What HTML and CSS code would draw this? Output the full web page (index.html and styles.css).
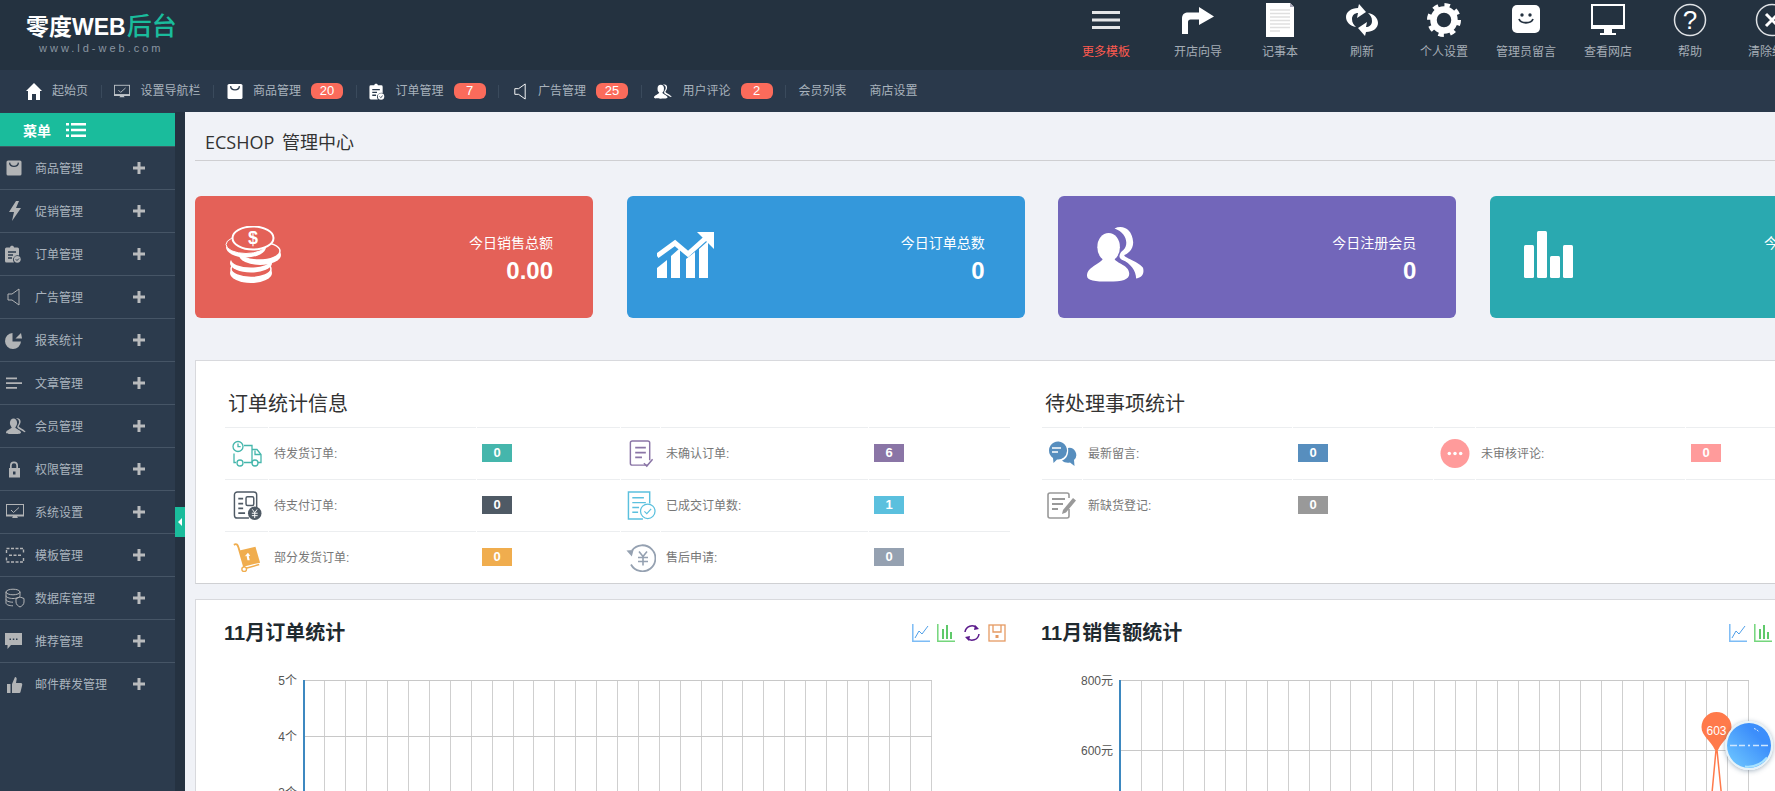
FILE: index.html
```html
<!DOCTYPE html>
<html lang="zh-CN">
<head>
<meta charset="utf-8">
<title>ECSHOP 管理中心</title>
<link rel="stylesheet" href="styles.css">
</head>
<body>
<svg class="sprite" xmlns="http://www.w3.org/2000/svg">
  <symbol id="i-bag" viewBox="0 0 16 16"><rect x="0.5" y="0.5" width="15" height="15" rx="1.6" fill="currentColor"/><path d="M3.6 2.6c.4 5 8.4 5 8.8 0" fill="none" stroke="#2b3a4c" stroke-width="1.3"/></symbol>
  <symbol id="i-clip" viewBox="0 0 16 18"><path d="M1.5 2.5H5C5 .3 9 .3 9 2.5h3.500A1.500 1.500 0 0 1 14 4v6.500a4.500 4.500 0 0 0-5 7H1.500A1.500 1.500 0 0 1 0 16V4a1.500 1.500 0 0 1 1.500-1.500z" fill="currentColor"/><path d="M3 7h8M3 10h5M3 13h4" stroke="#2b3a4c" stroke-width="1.400"/><circle cx="12.300" cy="14.300" r="3.400" fill="currentColor"/><path d="M10.800 14.300l1.200 1.200 2-2" fill="none" stroke="#2b3a4c" stroke-width="1"/></symbol>
  <symbol id="i-speaker" viewBox="0 0 13 18"><path d="M1 6h4l7-5v16l-7-5H1z" fill="none" stroke="currentColor" stroke-width="1"/></symbol>
  <symbol id="i-people" viewBox="0 0 20 16"><ellipse cx="7.500" cy="5" rx="3.600" ry="4.600" fill="currentColor"/><path d="M6 8.500C6 11 0 12 0 14.500 0 16 3 16 7.500 16S15 16 15 14.500C15 12 9 11 9 8.500z" fill="currentColor"/><path d="M10 .5c3-1 5 1 4.500 4-.3 2-1.800 3-1.800 4 1 1.500 5 2.500 7 5.500-1.500.5-2.500-.5-4-1.500-1.500-1-4.500-2-4.500-3.500 0-1.200 1.500-2.500 1.800-4.500.2-2-.8-3.500-3-4z" fill="currentColor"/></symbol>
  <symbol id="i-monitor" viewBox="0 0 18 15"><rect x="0.500" y="0.500" width="17" height="10.500" fill="none" stroke="currentColor"/><path d="M5 6l2.500 2.500L13 3.500" fill="none" stroke="currentColor" stroke-width="1"/><path d="M0 11h18v1.500H0zM7 12.500h4l1 1.500H6z" fill="currentColor"/></symbol>
  <symbol id="i-plus" viewBox="0 0 12 12"><path d="M4.500 0h3v4.500H12v3H7.500V12h-3V7.500H0v-3h4.500z" fill="currentColor"/></symbol>
  <symbol id="i-line" viewBox="0 0 18 18"><path d="M.8 0v17.200H18" fill="none" stroke="#7dbcf5" stroke-width="1.500"/><path d="M3 14l4-7 3 3 6-8" fill="none" stroke="#4f9fe8" stroke-width="1"/></symbol>
  <symbol id="i-bar" viewBox="0 0 18 18"><path d="M.8 0v17.200H18" fill="none" stroke="#74d67c" stroke-width="1.500"/><path d="M5 15V5h2v10zM9 15V1h2v14zM13 15V8h2v7z" fill="#5fc96a"/></symbol>
  <symbol id="i-grid" viewBox="0 0 720 140"><path d="M99.500 0V140M120.500 0V140M141.500 0V140M162.500 0V140M183.500 0V140M204.500 0V140M225.500 0V140M246.500 0V140M267.500 0V140M288.500 0V140M308.500 0V140M329.500 0V140M350.500 0V140M371.500 0V140M392.500 0V140M413.500 0V140M434.500 0V140M455.500 0V140M476.500 0V140M497.500 0V140M517.500 0V140M538.500 0V140M559.500 0V140M580.500 0V140M601.500 0V140M622.500 0V140M643.500 0V140M664.500 0V140M685.500 0V140M706.500 0V140" fill="none" stroke="#cfcfcf" stroke-width="1"/></symbol>
</svg>

<header class="topbar">
  <div class="logo">
    <div class="logo-main">零度WEB<b>后台</b></div>
    <div class="logo-url">www.ld-web.com</div>
  </div>
  <ul class="tools">
    <li class="tool tool-first">
      <svg class="tool-icon" viewBox="0 0 34 34"><path d="M3 8h28v3H3zM3 15.500h28v3H3zM3 23h28v3H3z" fill="#e4e6e8"/></svg>
      <span>更多模板</span>
    </li>
    <li class="tool">
      <svg class="tool-icon" viewBox="0 0 34 34"><path d="M1 31V15.500C1 11 4 9.500 7 9.500h11V4l15 9.500L18 22v-5.500h-8.500c-1.500 0-2.500 1-2.500 2.500v12z" fill="#fff"/></svg>
      <span>开店向导</span>
    </li>
    <li class="tool">
      <svg class="tool-icon" viewBox="0 0 34 34"><path d="M3 0h24l4 4v30H3z" fill="#fff"/><path d="M27 0v4h4z" fill="#aab"/><path d="M7 7h20M7 10.500h20M7 14h20M7 17.500h20M7 21h20M7 24.500h20M7 28h10" stroke="#dfdfdf" stroke-width="1.600"/></svg>
      <span>记事本</span>
    </li>
    <li class="tool">
      <svg class="tool-icon" viewBox="0 0 34 34"><path d="M1 14C1 9 6 5 13 5L14 1l7 8-9 6 1-5C10 10 7 12 7 16c0 4 2 6 4 8C5 23 1 19 1 14z" fill="#fff"/><path d="M33 20C33 25 28 29 21 29L20 33l-7-8 9-6-1 5C24 24 27 22 27 18c0-4-2-6-4-8C29 11 33 15 33 20z" fill="#fff"/></svg>
      <span>刷新</span>
    </li>
    <li class="tool">
      <svg class="tool-icon" viewBox="0 0 34 34"><circle cx="17" cy="17" r="10.500" fill="none" stroke="#fff" stroke-width="6.500"/><circle cx="17" cy="17" r="15" fill="none" stroke="#fff" stroke-width="4" stroke-dasharray="5.500 6.280"/></svg>
      <span>个人设置</span>
    </li>
    <li class="tool">
      <svg class="tool-icon" viewBox="0 0 34 34"><rect x="3" y="2" width="28" height="28" rx="5" fill="#fff"/><circle cx="13" cy="12" r="1.700" fill="#243240"/><circle cx="21" cy="12" r="1.700" fill="#243240"/><path d="M10 16c2 5 12 5 14 0" fill="none" stroke="#243240" stroke-width="1.800"/></svg>
      <span>管理员留言</span>
    </li>
    <li class="tool">
      <svg class="tool-icon" viewBox="0 0 34 34"><path d="M0 1h34v25H0z" fill="#fff"/><path d="M2 3h30v19H2z" fill="#243240"/><path d="M13 26h8v4h4v2H9v-2h4z" fill="#fff"/></svg>
      <span>查看网店</span>
    </li>
    <li class="tool">
      <svg class="tool-icon" viewBox="0 0 34 34"><circle cx="17" cy="17" r="15.500" fill="none" stroke="#dfe2e5" stroke-width="1.500"/><text class="glyph" x="17" y="26" text-anchor="middle">?</text></svg>
      <span>帮助</span>
    </li>
    <li class="tool">
      <svg class="tool-icon" viewBox="0 0 34 34"><circle cx="17" cy="17" r="15.500" fill="none" stroke="#dfe2e5" stroke-width="1.500"/><path d="M11 11l12 12M23 11L11 23" stroke="#fff" stroke-width="3"/></svg>
      <span>清除缓存</span>
    </li>
  </ul>
</header>

<nav class="navbar">
  <a class="nav-item"><svg class="nav-icon" viewBox="0 0 16 17"><path d="M8 0l8 8h-2v9h-4v-6H6v6H2V8H0z" fill="#fff"/></svg>起始页</a>
  <i class="sep"></i>
  <a class="nav-item"><svg class="nav-icon nav-dim"><use href="#i-monitor"/></svg>设置导航栏</a>
  <i class="sep"></i>
  <a class="nav-item"><svg class="nav-icon"><use href="#i-bag"/></svg>商品管理<em class="pill">20</em></a>
  <i class="sep"></i>
  <a class="nav-item"><svg class="nav-icon"><use href="#i-clip"/></svg>订单管理<em class="pill">7</em></a>
  <i class="sep"></i>
  <a class="nav-item"><svg class="nav-icon"><use href="#i-speaker"/></svg>广告管理<em class="pill">25</em></a>
  <i class="sep"></i>
  <a class="nav-item"><svg class="nav-icon nav-icon-wide"><use href="#i-people"/></svg>用户评论<em class="pill">2</em></a>
  <i class="sep"></i>
  <a class="nav-item">会员列表</a>
  <a class="nav-item nav-last">商店设置</a>
</nav>

<div class="layout">
  <aside class="sidebar">
    <div class="menu-head">
      <span>菜单</span>
      <svg class="menu-head-icon" viewBox="0 0 20 14"><path d="M0 0h3v2.600H0zM5 0h15v2.600H5zM0 5.700h3v2.600H0zM5 5.700h15v2.600H5zM0 11.400h3V14H0zM5 11.400h15V14H5z" fill="#fff"/></svg>
    </div>
    <ul class="menu">
      <li><svg class="side-icon" viewBox="0 0 22 20"><use href="#i-bag" x="2" y="2" width="16" height="16"/></svg><span>商品管理</span><svg class="plus"><use href="#i-plus"/></svg></li>
      <li><svg class="side-icon" viewBox="0 0 22 20"><path d="M12 0L5 11h5l-2 9 9-13h-5l3-7z" fill="currentColor"/></svg><span>促销管理</span><svg class="plus"><use href="#i-plus"/></svg></li>
      <li><svg class="side-icon" viewBox="0 0 22 20"><use href="#i-clip" x="1" y="1" width="16" height="18"/></svg><span>订单管理</span><svg class="plus"><use href="#i-plus"/></svg></li>
      <li><svg class="side-icon" viewBox="0 0 22 20"><use href="#i-speaker" x="3" y="1" width="13" height="18"/></svg><span>广告管理</span><svg class="plus"><use href="#i-plus"/></svg></li>
      <li><svg class="side-icon" viewBox="0 0 22 20"><path d="M8.500 3a8 8 0 1 0 8.500 8.500H8.500z" fill="currentColor"/><path d="M11.500 8.500L17 3l1 5.500z" fill="currentColor"/></svg><span>报表统计</span><svg class="plus"><use href="#i-plus"/></svg></li>
      <li><svg class="side-icon" viewBox="0 0 22 20"><path d="M2 4.500h11v1.800H2zM2 9.200h16v1.800H2zM2 14h11v1.800H2z" fill="currentColor"/></svg><span>文章管理</span><svg class="plus"><use href="#i-plus"/></svg></li>
      <li><svg class="side-icon" viewBox="0 0 22 20"><use href="#i-people" x="2" y="2" width="20" height="16"/></svg><span>会员管理</span><svg class="plus"><use href="#i-plus"/></svg></li>
      <li><svg class="side-icon" viewBox="0 0 22 20"><path d="M6 9V6.500a4 4 0 0 1 8 0V9h-1.700V6.500a2.300 2.300 0 0 0-4.600 0V9z" fill="currentColor"/><path d="M5 9h11v9.500H5zM9 12.500v3h2.500v-3z" fill="currentColor" fill-rule="evenodd"/></svg><span>权限管理</span><svg class="plus"><use href="#i-plus"/></svg></li>
      <li><svg class="side-icon" viewBox="0 0 22 20"><use href="#i-monitor" x="2" y="2" width="18" height="15"/></svg><span>系统设置</span><svg class="plus"><use href="#i-plus"/></svg></li>
      <li><svg class="side-icon" viewBox="0 0 22 20"><path d="M2.500 8V3.500h17V8M2.500 12.500v4.500h17v-4.500M5 10.200h12" fill="none" stroke="currentColor" stroke-width="1.400" stroke-dasharray="3 1.500"/></svg><span>模板管理</span><svg class="plus"><use href="#i-plus"/></svg></li>
      <li><svg class="side-icon" viewBox="0 0 22 20"><g fill="none" stroke="currentColor" stroke-width="1"><ellipse cx="9" cy="4" rx="7" ry="2.800"/><path d="M2 4v11c0 1.600 3 2.800 7 2.800M2 7.700c0 1.500 3 2.800 7 2.800s7-1.300 7-2.800V4M2 11.400c0 1.500 3 2.800 7 2.800"/><path d="M12 10.500l4-1.500 4 1.500v3.500c0 2.500-2 4-4 5-2-1-4-2.500-4-5z"/></g></svg><span>数据库管理</span><svg class="plus"><use href="#i-plus"/></svg></li>
      <li><svg class="side-icon" viewBox="0 0 22 20"><path d="M1 2h17v12H7l-3.500 4v-4H1z" fill="currentColor"/><path d="M5.500 7.500h1.500v1.500H5.500zM8.800 7.500h1.500v1.500H8.800zM12 7.500h1.500v1.500H12z" fill="#2b3a4c"/></svg><span>推荐管理</span><svg class="plus"><use href="#i-plus"/></svg></li>
      <li><svg class="side-icon" viewBox="0 0 22 20"><path d="M3 9h3.500v9H3zM8 9l3-7c1.500 0 2 1.500 1.500 3L12 8h5c1 0 1.500 1 1.200 2l-1.700 7c-.2.800-.8 1-1.500 1H8z" fill="currentColor"/></svg><span>邮件群发管理</span><svg class="plus"><use href="#i-plus"/></svg></li>
    </ul>
    <div class="collapse"><i></i></div>
  </aside>

  <main class="main">
    <div class="content">
      <h1 class="page-title">ECSHOP 管理中心</h1>

      <section class="cards">
        <div class="card card-red">
          <svg class="card-icon" viewBox="0 0 57 57">
            <ellipse cx="26" cy="47" rx="21" ry="10" fill="#fff"/>
            <ellipse cx="26" cy="43" rx="20" ry="8.500" fill="#e46158" stroke="#fff" stroke-width="1.500"/>
            <ellipse cx="26" cy="37" rx="21" ry="9.500" fill="#fff"/>
            <ellipse cx="26" cy="33.500" rx="20" ry="8" fill="#e46158"/>
            <ellipse cx="35" cy="29" rx="21" ry="10" fill="#fff"/>
            <ellipse cx="34" cy="25" rx="21" ry="9" fill="#e46158" stroke="#fff" stroke-width="1.500"/>
            <ellipse cx="21" cy="21" rx="20" ry="10.500" fill="#fff"/>
            <ellipse cx="21" cy="18.500" rx="20" ry="9" fill="#e46158" stroke="#fff" stroke-width="1"/>
            <ellipse cx="28" cy="12" rx="20.500" ry="11.500" fill="#e46158" stroke="#fff" stroke-width="2"/>
            <text class="glyph-dollar" x="28" y="18" text-anchor="middle">$</text>
          </svg>
          <div class="card-text"><p>今日销售总额</p><strong>0.00</strong></div>
        </div>
        <div class="card card-blue">
          <svg class="card-icon card-icon-trend" viewBox="0 0 57 46">
            <path d="M0 46V36l10-8v18zM14 46V24l9-8v30zM29 46V27l9-7v26zM42 46V17l9-8v37z" fill="#fff"/>
            <path d="M0 24l18-13 13 11L50 5" fill="none" stroke="#fff" stroke-width="5"/>
            <path d="M40 0h17v17z" fill="#fff"/>
          </svg>
          <div class="card-text"><p>今日订单总数</p><strong>0</strong></div>
        </div>
        <div class="card card-purple">
          <svg class="card-icon" viewBox="0 0 58 57">
            <ellipse cx="22" cy="21" rx="11.500" ry="14.500" fill="#fff"/>
            <path d="M17 30C17 38 0 40 0 50 0 55 8 56 22 56S43 54 43 48C43 38 27 38 27 30z" fill="#fff"/>
            <path d="M28 2C36-2 46 2 47 16 47 24 41 28 38 29 37 32 50 34 57 42 59 50 54 52 50 53 50 45 44 37 36 34 31 32 33 27 37 24 43 18 40 6 28 2z" fill="#fff"/>
          </svg>
          <div class="card-text"><p>今日注册会员</p><strong>0</strong></div>
        </div>
        <div class="card card-teal">
          <svg class="card-icon card-icon-bars" viewBox="0 0 50 47">
            <rect y="14" width="10" height="33" rx="1.500" fill="#fff"/>
            <rect x="13" width="10" height="47" rx="1.500" fill="#fff"/>
            <rect x="26" y="25" width="10" height="22" rx="1.500" fill="#fff"/>
            <rect x="39" y="14" width="10" height="33" rx="1.500" fill="#fff"/>
          </svg>
          <div class="card-text"><p>今日订单总额</p><strong>0</strong></div>
        </div>
      </section>

      <section class="panel panel-stats">
        <div class="stat-block">
          <h2 class="stat-title">订单统计信息</h2>
          <div class="stat-grid stat-grid-left">
            <div class="cell cell-icon"><svg class="t-icon" viewBox="0 0 30 26"><g fill="none" stroke="#45b6ac" stroke-width="1.300"><circle cx="6" cy="6" r="5"/><path d="M6 3v3.200h2.600M12 5h8v17H12M20 9h5l4 5v8h-3M2 13v9h2"/><circle cx="8" cy="22.500" r="3"/><circle cx="23" cy="22.500" r="3"/><path d="M23 10v4h6"/></g></svg></div>
            <div class="cell cell-label">待发货订单:</div>
            <div class="cell cell-value"><b class="num num-teal">0</b></div>
            <div class="cell cell-icon"><svg class="t-icon" viewBox="0 0 28 30"><path d="M21 27H5a2 2 0 0 1-2-2V4a2 2 0 0 1 2-2h16a2 2 0 0 1 2 2v18" fill="none" stroke="#8a75a6" stroke-width="1.500"/><path d="M8 9h11M8 14h11M8 19h7" stroke="#8a75a6" stroke-width="1.800"/><path d="M17 25l3 3 6-7" fill="none" stroke="#8a75a6" stroke-width="1.500"/></svg></div>
            <div class="cell cell-label">未确认订单:</div>
            <div class="cell cell-value"><b class="num num-purple">6</b></div>

            <div class="cell cell-icon"><svg class="t-icon" viewBox="0 0 30 30"><path d="M17 28H5a3 3 0 0 1-3-3V4a3 3 0 0 1 3-3h17a3 3 0 0 1 3 3v13" fill="none" stroke="#4f5a65" stroke-width="1.500"/><path d="M6 8h5M6 13h5M6 18h5M6 23h7" stroke="#4f5a65" stroke-width="1.800"/><rect x="14" y="6" width="8" height="9" rx="1.500" fill="none" stroke="#4f5a65" stroke-width="1.500"/><circle cx="23" cy="23" r="7" fill="#4f5a65"/><path d="M20.500 19l2.500 3.500 2.500-3.500M20 23h6M20 25.500h6M23 22.500v5.500" fill="none" stroke="#fff" stroke-width="1"/></svg></div>
            <div class="cell cell-label">待支付订单:</div>
            <div class="cell cell-value"><b class="num num-dark">0</b></div>
            <div class="cell cell-icon"><svg class="t-icon" viewBox="0 0 30 30"><path d="M17 29H2V1h22v12" fill="none" stroke="#5bc0de" stroke-width="1.500"/><path d="M6 7h12M6 12h14M6 17h7M6 22h6" stroke="#5bc0de" stroke-width="1.500"/><circle cx="22" cy="21" r="7.500" fill="#fff" stroke="#5bc0de" stroke-width="1.300"/><path d="M18.500 21l2.500 2.500 4.500-5" fill="none" stroke="#5bc0de" stroke-width="1.200"/></svg></div>
            <div class="cell cell-label">已成交订单数:</div>
            <div class="cell cell-value"><b class="num num-cyan">1</b></div>

            <div class="cell cell-icon"><svg class="t-icon" viewBox="0 0 30 31"><path d="M1 2c3-2 4 0 5 3l6 21" fill="none" stroke="#f0ad4e" stroke-width="2"/><circle cx="12" cy="28" r="2.500" fill="none" stroke="#f0ad4e" stroke-width="1.500"/><path d="M14 27l14-4" stroke="#f0ad4e" stroke-width="1.600"/><path d="M7 8l17-4 5 17-17 4z" fill="#f0ad4e"/><path d="M15.500 18.500l-1-5-2 1 3.500-4 2.500 3-1.600.3 1 4.600z" fill="#fff"/></svg></div>
            <div class="cell cell-label">部分发货订单:</div>
            <div class="cell cell-value"><b class="num num-orange">0</b></div>
            <div class="cell cell-icon"><svg class="t-icon" viewBox="0 0 30 28"><path d="M6 7a13 13 0 1 1-1 14" fill="none" stroke="#95a1b1" stroke-width="1.800"/><path d="M1 6l7 1-3 6z" fill="#95a1b1" transform="rotate(-12 5 9)"/><path d="M13 8l4 5 4-5M12 14h10M12 18h10M17 13v9" fill="none" stroke="#95a1b1" stroke-width="1.600"/></svg></div>
            <div class="cell cell-label">售后申请:</div>
            <div class="cell cell-value"><b class="num num-gray">0</b></div>
          </div>
        </div>
        <div class="stat-block">
          <h2 class="stat-title">待处理事项统计</h2>
          <div class="stat-grid stat-grid-right">
            <div class="cell cell-icon"><svg class="t-icon" viewBox="0 0 30 27"><path d="M20 11a9 9 0 0 1-10 8.500L6.500 23l-.5-5A9 9 0 1 1 20 11z" fill="#578ebe"/><path d="M5 8h9M5 12h6" stroke="#fff" stroke-width="1.300"/><path d="M21 8a7 7 0 0 1 6 12l.5 6-4.500-3.500c-3 .5-6 0-8-2 4-1 7-6 6-12.500z" fill="#578ebe"/></svg></div>
            <div class="cell cell-label">最新留言:</div>
            <div class="cell cell-value"><b class="num num-blue">0</b></div>
            <div class="cell cell-icon"><svg class="t-icon" viewBox="0 0 28 28"><circle cx="14" cy="14" r="14" fill="#ff9b9b"/><circle cx="8.500" cy="14" r="1.700" fill="#fff"/><circle cx="14" cy="14" r="1.700" fill="#fff"/><circle cx="19.500" cy="14" r="1.700" fill="#fff"/></svg></div>
            <div class="cell cell-label">未审核评论:</div>
            <div class="cell cell-value"><b class="num num-pink">0</b></div>

            <div class="cell cell-icon"><svg class="t-icon" viewBox="0 0 30 27"><path d="M22 17v7a2 2 0 0 1-2 2H3a2 2 0 0 1-2-2V3a2 2 0 0 1 2-2h17a2 2 0 0 1 2 2v3" fill="none" stroke="#999" stroke-width="1.600"/><path d="M5 7h13M5 12h11M5 17h6" stroke="#999" stroke-width="1.800"/><path d="M26 6l3 2.500-10 12-4 1.500 1-4z" fill="#999"/></svg></div>
            <div class="cell cell-label">新缺货登记:</div>
            <div class="cell cell-value"><b class="num num-mid">0</b></div>
            <div class="cell"></div>
            <div class="cell"></div>
            <div class="cell"></div>
          </div>
        </div>
      </section>

      <section class="panel panel-charts">
        <div class="chart-block">
          <div class="chart-head">
            <h3>11月订单统计</h3>
            <div class="chart-tools">
              <svg class="c-icon"><use href="#i-line"/></svg>
              <svg class="c-icon"><use href="#i-bar"/></svg>
              <svg class="c-icon" viewBox="0 0 18 18"><g fill="none" stroke="#5b1a8b" stroke-width="1.500"><path d="M2 8a7 7 0 0 1 12-4"/><path d="M16 10a7 7 0 0 1-12 4"/></g><path d="M12 1l4 4-5 1zM6 17l-4-4 5-1z" fill="#5b1a8b"/></svg>
              <svg class="c-icon" viewBox="0 0 18 18"><g fill="none" stroke="#e59a63" stroke-width="1.300"><rect x="1" y="1" width="16" height="16"/><path d="M5 1v7h8V1"/></g><rect x="7.500" y="11" width="3" height="3" fill="#e59a63"/></svg>
            </div>
          </div>
          <svg class="chart" viewBox="0 0 785 160">
            <use href="#i-grid" x="0" y="20" width="720" height="140"/>
            <path class="grid-h" d="M79 20.500H707M79 76.500H707M79 132.500H707"/>
            <path class="axis" d="M79 20V160"/>
            <text class="tick" x="72" y="25" text-anchor="end">5个</text>
            <text class="tick" x="72" y="81" text-anchor="end">4个</text>
            <text class="tick" x="72" y="137" text-anchor="end">3个</text>
          </svg>
        </div>
        <div class="chart-block">
          <div class="chart-head">
            <h3>11月销售额统计</h3>
            <div class="chart-tools">
              <svg class="c-icon"><use href="#i-line"/></svg>
              <svg class="c-icon"><use href="#i-bar"/></svg>
              <svg class="c-icon" viewBox="0 0 18 18"><g fill="none" stroke="#5b1a8b" stroke-width="1.500"><path d="M2 8a7 7 0 0 1 12-4"/><path d="M16 10a7 7 0 0 1-12 4"/></g></svg>
              <svg class="c-icon" viewBox="0 0 18 18"><rect x="1" y="1" width="16" height="16" fill="none" stroke="#e59a63" stroke-width="1.300"/></svg>
            </div>
          </div>
          <svg class="chart" viewBox="0 0 785 160">
            <use href="#i-grid" x="0" y="20" width="720" height="140"/>
            <path class="grid-h" d="M78 20.500H707M78 90.500H707"/>
            <path class="axis" d="M78 20V160"/>
            <text class="tick" x="71" y="25" text-anchor="end">800元</text>
            <text class="tick" x="71" y="95" text-anchor="end">600元</text>
            <path class="series" d="M674 90L667.500 160M675 90L682 160"/>
            <path class="pin" d="M674.500 52a15 15 0 0 1 15 15c0 9-9 13-13.500 23h-3C668.500 80 659.500 76 659.500 67a15 15 0 0 1 15-15z"/>
            <text class="pin-text" x="674.500" y="75" text-anchor="middle">603</text>
          </svg>
        </div>
      </section>
    </div>
  </main>
</div>

<div class="ball">
  <svg class="ball-art" viewBox="0 0 44 44"><path d="M3 22h7M12 22h6M26 22h6M34 22h7" stroke="#cfe6ff" stroke-width="1.500"/><circle cx="22" cy="22" r="1" fill="#e8f3ff"/><path d="M27 5c2 .5 4 2 5 3.500" fill="none" stroke="#d7eaff" stroke-width="1" stroke-dasharray="2 1"/><path d="M18 43c8 1 16-2 22-9" fill="none" stroke="#a8e3ff" stroke-width="2"/></svg>
</div>
</body>
</html>
```
FILE: styles.css
```css
* { box-sizing: border-box; }
html, body { margin: 0; padding: 0; height: 100%; overflow: hidden; }
body {
  background: #f0f2f7;
  color: #333;
  font-family: "Liberation Sans", "Noto Sans CJK SC", sans-serif;
  font-size: 12px;
  display: flex;
  flex-direction: column;
  height: 791px;
}
ul { list-style: none; margin: 0; padding: 0; }
h1, h2, h3, p { margin: 0; font-weight: normal; }
.sprite { display: none; }

/* top bar */
.topbar {
  flex: none;
  height: 70px;
  background: #243240;
  display: flex;
  justify-content: space-between;
  overflow: hidden;
}
.logo { padding: 13px 0 0 26px; }
.logo-main { color: #fff; font-size: 23px; line-height: 26px; font-weight: bold; white-space: nowrap; }
.logo-main b { color: #1abc9c; font-size: 25px; font-weight: 500; margin-left: 1px; }
.logo-url { color: #8a95a0; font-size: 11px; line-height: 14px; letter-spacing: 3px; margin: 1px 0 0 13px; }
.tools { display: flex; flex: none; margin-right: -38px; }
.tool {
  width: 82px;
  padding-top: 3px;
  display: flex;
  flex-direction: column;
  align-items: center;
  color: #a4adb6;
  white-space: nowrap;
}
.tool span { margin-top: 6px; line-height: 18px; }
.tool-first { margin-right: 10px; color: #ff5a4f; }
.tool-icon { width: 34px; height: 34px; flex: none; }
.glyph { fill: #fff; font-size: 26px; font-family: "Liberation Sans", sans-serif; }

/* nav bar */
.navbar {
  flex: none;
  height: 42px;
  background: #2a394b;
  color: #a8b2bc;
  display: flex;
  align-items: center;
  gap: 12.500px;
  padding-left: 25.500px;
}
.nav-item { display: flex; align-items: center; white-space: nowrap; line-height: 18px; }
.nav-icon { width: 16px; height: 17px; margin-right: 10.500px; color: #fff; flex: none; }
.nav-icon-wide { width: 18px; }
.nav-dim { color: #c0c5ca; }
.nav-last { margin-left: 10.500px; }
.sep { width: 1px; height: 13px; background: #3a4a5c; }
.pill {
  width: 32px;
  height: 16px;
  margin-left: 10px;
  border-radius: 6px;
  background: #fb6b5b;
  color: #fff;
  font-style: normal;
  font-size: 13px;
  line-height: 16px;
  text-align: center;
}

/* layout */
.layout { flex: 1; min-height: 0; display: flex; }
.sidebar {
  position: relative;
  flex: none;
  width: 185px;
  padding-top: 1px;
  background: #2c3b4d;
  border-right: 10px solid #253241;
  border-top: 0;
}
.menu-head {
  height: 34px;
  background: #1abc9c;
  border-bottom: 1px solid #3f5a62;
  color: #fff;
  font-size: 14px;
  font-weight: bold;
  display: flex;
  align-items: center;
  padding-left: 23px;
  gap: 15px;
}
.menu-head-icon { width: 20px; height: 14px; }
.menu li {
  height: 43px;
  border-bottom: 1px solid #465566;
  display: flex;
  align-items: center;
  padding-left: 4px;
  color: #aab4be;
  position: relative;
}
.menu li:last-child { border-bottom: 0; }
.side-icon { width: 22px; height: 20px; color: #b2b4b6; flex: none; }
.menu li span { margin-left: 9px; padding-bottom: 2px; }
.plus { position: absolute; left: 133px; top: 15px; width: 12px; height: 12px; color: #b9bbbd; }
.collapse {
  position: absolute;
  left: 175px;
  top: 395px;
  width: 10px;
  height: 30px;
  background: #1abc9c;
  display: flex;
  align-items: center;
  justify-content: center;
}
.collapse i {
  width: 0;
  height: 0;
  border-style: solid;
  border-width: 4px 4px 4px 0;
  border-color: transparent #fff transparent transparent;
}

/* main */
.main { flex: 1; min-width: 0; overflow: hidden; }
.content { width: 1693px; margin-left: 10px; }
.page-title {
  height: 49px;
  border-bottom: 1px solid #cfcfd2;
  padding: 17px 0 0 10px;
  color: #333;
  font-family: "Open Sans", "Noto Sans CJK SC", sans-serif;
  font-size: 18px;
  line-height: 26px;
  word-spacing: 3px;
}

.cards { display: grid; grid-template-columns: repeat(4, 398px); column-gap: 33.670px; margin-top: 35px; }
.card {
  height: 122px;
  border-radius: 6px;
  display: flex;
  justify-content: space-between;
  padding: 30px 40px 0 30px;
  color: #fff;
}
.card-red { background: #e46158; }
.card-blue { background: #3498db; }
.card-purple { background: #7266ba; padding-left: 29px; }
.card-teal { background: #2aa9b0; padding-left: 34px; }
.card-icon { width: 57px; height: 57px; flex: none; }
.card-icon-trend { height: 46px; margin-top: 6px; }
.card-icon-bars { width: 50px; height: 47px; margin-top: 5px; }
.card-text { text-align: right; padding-top: 7px; }
.card-text p { font-size: 14px; line-height: 20px; }
.card-text strong { display: block; font-size: 24px; line-height: 28px; margin-top: 4px; }
.glyph-dollar { fill: #fff; font-size: 18px; font-weight: bold; font-family: "Liberation Sans", sans-serif; }

.panel { background: #fff; border: 1px solid #d8d9dd; border-bottom-color: #cfd0d3; }
.panel-stats { height: 224px; margin-top: 42px; display: flex; gap: 32px; padding-left: 29px; }
.panel-charts { margin-top: 15px; height: 400px; display: flex; gap: 32px; padding-left: 29px; }
.stat-block { width: 785px; flex: none; }
.stat-title { height: 66px; padding: 29px 0 0 3px; font-size: 20px; line-height: 28px; color: #333; }
.stat-grid { display: grid; column-gap: 1px; grid-auto-rows: 52px; }
.stat-grid-left { grid-template-columns: 43px 207px 143px 39px 207px 141px; }
.stat-grid-right { grid-template-columns: 40px 209px 140px 41px 209px 141px; }
.cell { border-top: 1px solid #eceef0; display: flex; align-items: center; padding-bottom: 1px; }
.cell-icon { justify-content: center; }
.cell-label { padding: 0 0 3px 5px; color: #777; }
.cell-value { padding-left: 5px; }
.t-icon { width: 30px; height: 29px; flex: none; }
.num { width: 30px; height: 18px; color: #fff; font-size: 13px; line-height: 18px; text-align: center; }
.num-teal { background: #45b6ac; }
.num-purple { background: #8a75a6; }
.num-dark { background: #4f5a65; }
.num-cyan { background: #5bc0de; }
.num-orange { background: #f0ad4e; }
.num-gray { background: #95a1b1; }
.num-blue { background: #578ebe; }
.num-pink { background: #ff9b9b; }
.num-mid { background: #999; }

.chart-block { width: 785px; flex: none; }
.chart-head { height: 60px; padding: 6px 4px 0 0; display: flex; justify-content: space-between; align-items: center; }
.chart-head h3 { font-size: 20px; font-weight: bold; color: #1f2a30; line-height: 28px; margin-left: -1px; }
.chart-tools { display: flex; gap: 7.500px; }
.c-icon { width: 18px; height: 18px; flex: none; }
.chart { display: block; width: 785px; height: 160px; }
.grid-h { fill: none; stroke: #c8c8c8; stroke-width: 1; }
.axis { fill: none; stroke: #3d88c0; stroke-width: 2; }
.tick { fill: #555; font-size: 12px; }
.series { fill: none; stroke: #ff7a4b; stroke-width: 1.500; }
.pin { fill: #ff7a4b; }
.pin-text { fill: #fff; font-size: 12px; }

/* floating ball */
.ball {
  position: fixed;
  left: 1725px;
  top: 721px;
  width: 48px;
  height: 49px;
  border-radius: 50%;
  border: 2px solid #e6f2f8;
  background: linear-gradient(45deg, #73ccff 0%, #3c8efb 70%);
  box-shadow: 0 1px 5px rgba(60, 90, 120, .45);
}
.ball-art { display: block; width: 100%; height: 100%; }
```
